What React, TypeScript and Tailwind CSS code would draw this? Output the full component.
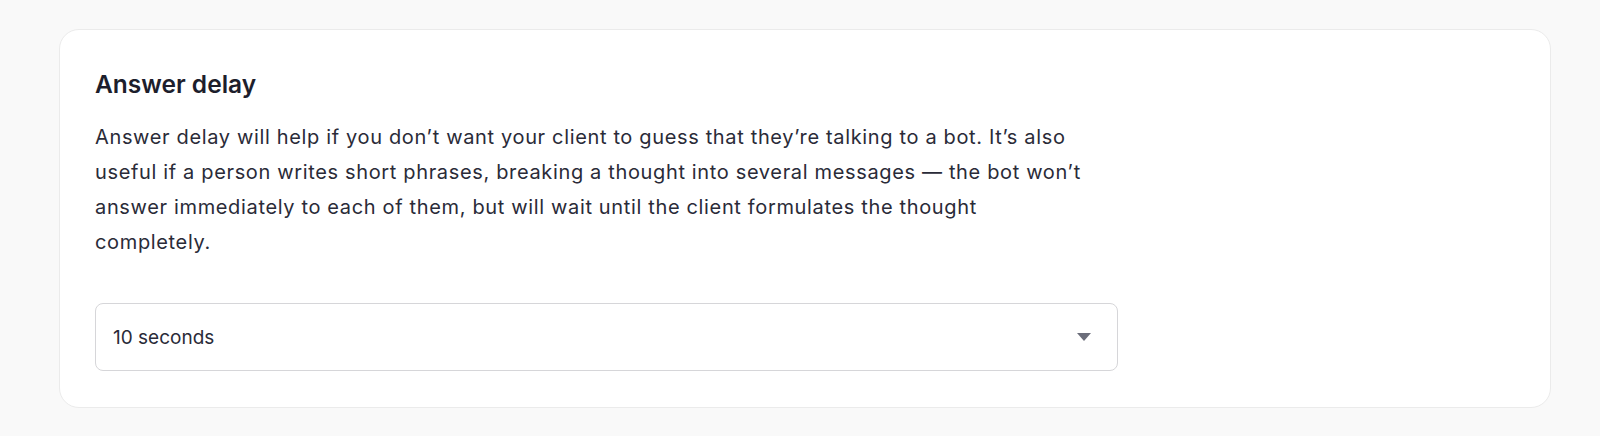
import { useState } from "react"

const Caret = () => (
  <svg width="14" height="8" viewBox="0 0 14 8" className="text-[#6b6d7a]">
    <path d="M0 0h14L7 8z" fill="currentColor" />
  </svg>
)

export default function App() {
  const [delay] = useState("10 seconds")

  return (
    <div className="min-h-[436px] bg-[#f9f9f9] pt-[29px] pl-[59px] pr-[49px] font-['Inter',sans-serif]">
      <div className="bg-white border border-[#ebebeb] rounded-[20px] pl-[35px] pt-[38px] pb-[36px]">
        <h2 className="text-[24.5px] leading-[32px] font-semibold text-[#1d1e2c]">Answer delay</h2>
        <p className="mt-[20px] max-w-[1000px] text-[20px] leading-[35px] text-[#2a2b38] tracking-[0.65px]">
          Answer delay will help if you don’t want your client to guess that they’re talking to a bot. It’s also useful if a person writes short phrases, breaking a thought into several messages — the bot won’t answer immediately to each of them, but will wait until the client formulates the thought completely.
        </p>
        <button className="mt-[43px] w-[1023px] h-[68px] flex items-center justify-between pl-[17px] pr-[26px] border border-[#d6d6d9] rounded-[8px] bg-white text-left">
          <span className="pt-[3px] text-[19px] text-[#2a2b38]">{delay}</span>
          <Caret />
        </button>
      </div>
    </div>
  )
}
